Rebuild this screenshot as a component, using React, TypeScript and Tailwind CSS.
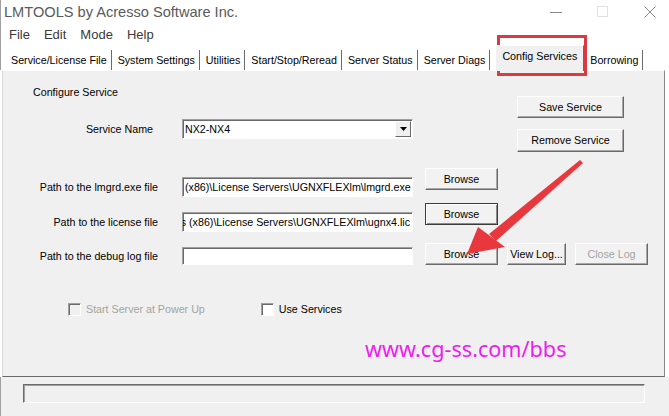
import type { ReactNode } from "react";

const TABS = [
  "Service/License File",
  "System Settings",
  "Utilities",
  "Start/Stop/Reread",
  "Server Status",
  "Server Diags",
  "Config Services",
  "Borrowing",
];
const ACTIVE = "Config Services";

// classic raised push button
function Btn({ w, h = 22, children, disabled, focus }: { w: number; h?: number; children: ReactNode; disabled?: boolean; focus?: boolean }) {
  return (
    <div
      style={{ width: w, height: h }}
      className={`flex shrink-0 items-center justify-center whitespace-nowrap border bg-[#f2f2f2] ${
        focus
          ? "border-[#3c3c3c] shadow-[inset_1px_1px_0_#fff,inset_-1px_-1px_0_#8a8a8a]"
          : "border-t-[#fdfdfd] border-l-[#fdfdfd] border-b-[#6a6a6a] border-r-[#6a6a6a] shadow-[inset_-1px_-1px_0_#a8a8a8]"
      } ${disabled ? "text-[#a3a3a3]" : "text-black"}`}
    >
      {children}
    </div>
  );
}

// sunken edit field
function Field({ w = 231, h = 20, children, right }: { w?: number; h?: number; children?: ReactNode; right?: boolean }) {
  return (
    <div
      style={{ width: w, height: h }}
      className={`flex shrink-0 items-center overflow-hidden whitespace-nowrap border border-t-[#a0a0a0] border-l-[#a0a0a0] border-b-[#fff] border-r-[#fff] bg-white pl-[2px] pr-[2px] shadow-[inset_1px_1px_0_#6b6b6b] ${
        right ? "justify-end" : ""
      }`}
    >
      {children}
    </div>
  );
}

function Check({ label, disabled }: { label: string; disabled?: boolean }) {
  return (
    <div className={`flex items-center gap-[5px] whitespace-nowrap ${disabled ? "text-[#a3a3a3]" : "text-black"}`}>
      <div
        className={`h-[13px] w-[13px] border border-t-[#a0a0a0] border-l-[#a0a0a0] border-b-white border-r-white shadow-[inset_1px_1px_0_#6b6b6b] ${
          disabled ? "bg-[#f0f0f0]" : "bg-white"
        }`}
      />
      <span>{label}</span>
    </div>
  );
}

function PathRow({
  label,
  value,
  fieldTop,
  fieldH = 20,
  right,
  focus,
  children,
}: {
  label: string;
  value: string;
  fieldTop: number;
  fieldH?: number;
  right?: boolean;
  focus?: boolean;
  children?: ReactNode;
}) {
  return (
    <div className="flex items-start">
      <div className="flex w-[179px] shrink-0 items-center pr-[24px]" style={{ marginTop: fieldTop, height: fieldH }}>
        <div className="w-full whitespace-nowrap text-right">{label}</div>
      </div>
      <div style={{ marginTop: fieldTop }}>
        <Field h={fieldH} right={right}>
          {value}
        </Field>
      </div>
      <div className="ml-[12px] flex items-start gap-[9px]">
        <Btn w={73} focus={focus}>Browse</Btn>
        {children}
      </div>
    </div>
  );
}

export default function App() {
  return (
    <div className="relative h-[416px] w-[669px] overflow-hidden bg-white font-['Liberation_Sans',Arial,sans-serif] text-[10.7px] leading-[13px] text-black">
      {/* title bar */}
      <div className="flex h-[24px] items-center border-l border-[#a0a0a0] pl-[3px]">
        <span className="text-[14.6px] text-[#5a5a5a]">LMTOOLS by Acresso Software Inc.</span>
        <div className="ml-auto flex items-center gap-[33px] pr-[12px]">
          <svg width="14" height="12" viewBox="0 0 14 12">
            <line x1="1" y1="6.5" x2="13" y2="6.5" stroke="#8a8a8a" strokeWidth="1" />
          </svg>
          <svg width="14" height="12" viewBox="0 0 14 12">
            <rect x="1.5" y="0.5" width="10" height="10" fill="none" stroke="#e2e2e2" strokeWidth="1" />
          </svg>
          <svg width="14" height="12" viewBox="0 0 14 12">
            <path d="M1.5 0.5 L12.5 11.5 M12.5 0.5 L1.5 11.5" stroke="#8a8a8a" strokeWidth="1" />
          </svg>
        </div>
      </div>

      {/* menu */}
      <div className="flex h-[21px] items-center gap-[14px] border-l border-[#a0a0a0] pl-[8px] text-[13px] leading-[15px] text-[#3a3a3a]">
        {["File", "Edit", "Mode", "Help"].map((m) => (
          <span key={m}>{m}</span>
        ))}
      </div>

      {/* tabs */}
      <div className="flex h-[25px] items-end whitespace-nowrap border-l border-[#a0a0a0] pl-[4px]">
        {TABS.map((t) =>
          t === ACTIVE ? (
            <div key={t} className="relative z-10 -mb-px ml-[5px] flex h-[26px] items-center border-l border-r border-t border-l-white border-t-white border-r-[#6a6a6a] bg-[#f0f0f0] px-[6px] pb-[4px]">
              {t}
            </div>
          ) : (
            <div key={t} className="flex h-[20px] items-center border-r border-[#6a6a6a] pl-[6px] pr-[4px] shadow-[1px_0_0_#fff]">
              {t}
            </div>
          ),
        )}
      </div>

      {/* tab page */}
      <div className="ml-[2px] mr-[4px] h-[307px] border border-t-white border-l-[#d8d8d8] border-b-[#6a6a6a] border-r-[#8a8a8a] bg-[#f0f0f0]">
        <div className="flex">
          <div className="w-[410px]">
            <div className="mt-[15px] pl-[30px]">Configure Service</div>
            <div className="mt-[20px] flex items-center">
              <div className="w-[150px] whitespace-nowrap text-right">Service Name</div>
              <div className="ml-[29px]">
                <div className="flex h-[20px] w-[231px] items-center border border-t-[#a0a0a0] border-l-[#a0a0a0] border-b-white border-r-white bg-white pl-[2px] shadow-[inset_1px_1px_0_#6b6b6b]">
                  <span>NX2-NX4</span>
                  <div className="ml-auto mr-px flex h-[16px] w-[16px] items-center justify-center border border-t-[#fdfdfd] border-l-[#fdfdfd] border-b-[#6a6a6a] border-r-[#6a6a6a] bg-[#f0f0f0]">
                    <svg width="7" height="4" viewBox="0 0 7 4">
                      <path d="M0 0 H7 L3.5 4 Z" fill="#000" />
                    </svg>
                  </div>
                </div>
              </div>
            </div>
          </div>
          <div className="ml-[104px] mt-[25px] flex flex-col gap-[11px]">
            <Btn w={107}>Save Service</Btn>
            <Btn w={107} h={23}>Remove Service</Btn>
          </div>
        </div>

        <div className="mt-[16px] flex flex-col">
          <PathRow label="Path to the lmgrd.exe file" value="(x86)\License Servers\UGNXFLEXlm\lmgrd.exe" fieldTop={9} />
          <div className="mt-[6px]">
            <PathRow label="Path to the license file" value="Files (x86)\License Servers\UGNXFLEXlm\ugnx4.lic" fieldTop={9} right focus />
          </div>
          <div className="mt-[11px]">
            <PathRow label="Path to the debug log file" value="" fieldTop={4} fieldH={18}>
              <Btn w={59}>View Log...</Btn>
              <Btn w={73} disabled>Close Log</Btn>
            </PathRow>
          </div>
        </div>

        <div className="mt-[38px] flex items-center pl-[65px]">
          <Check label="Start Server at Power Up" disabled />
          <div className="ml-[56px]">
            <Check label="Use Services" />
          </div>
        </div>
      </div>

      {/* status bar */}
      <div className="h-[39px] border-l border-[#a0a0a0] bg-[#f0f0f0] pt-[7px]">
        <div className="ml-[22px] h-[19px] w-[622px] border border-t-[#6b6b6b] border-l-[#6b6b6b] border-b-white border-r-white shadow-[inset_1px_1px_0_#a0a0a0]" />
      </div>

      {/* red annotation around the active tab */}
      <div className="pointer-events-none absolute left-[497px] top-[35px] h-[41px] w-[90px] border-[3px] border-[#dc3a40]" />

      {/* red arrow to the debug log Browse button */}
      <svg className="pointer-events-none absolute left-0 top-0" width="669" height="416" viewBox="0 0 669 416">
        <polygon points="580,160 583,163 496,241 489,234" fill="#e8383d" />
        <polygon points="467,254 478,227 505,247" fill="#e8383d" />
      </svg>

      <div className="pointer-events-none absolute left-[365px] top-[335px] font-['Noto_Sans',sans-serif] text-[21.6px] leading-[28px] text-[#ee1cee]">
        www.cg-ss.com/bbs
      </div>
    </div>
  );
}
